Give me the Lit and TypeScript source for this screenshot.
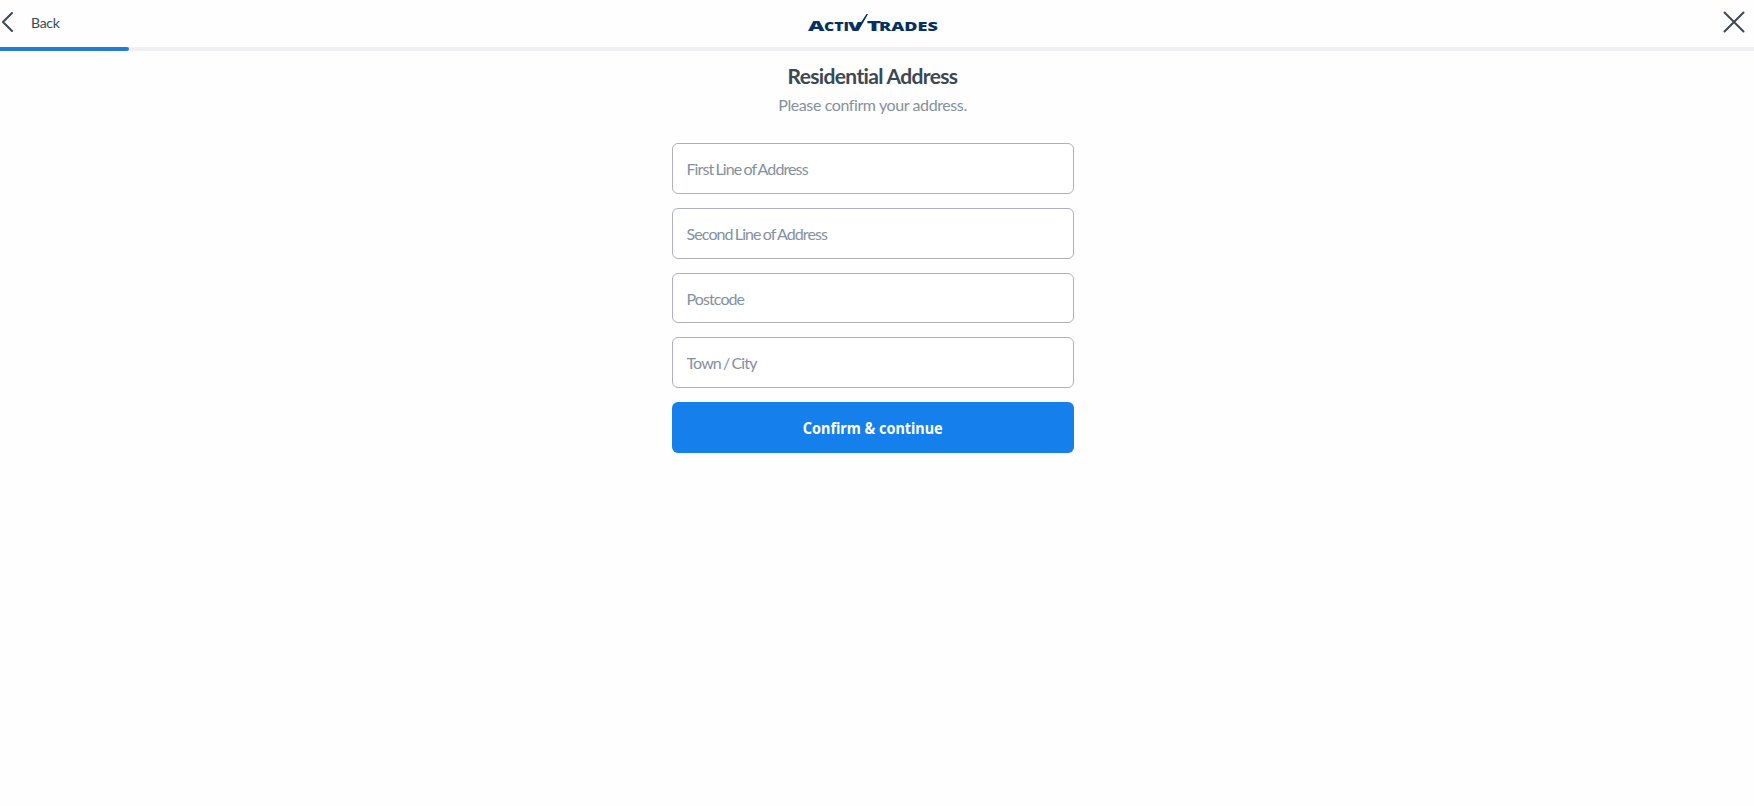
import { LitElement, css, html } from "lit";
import { customElement, property } from "lit/decorators.js";

const ADDRESS_FIELDS = [
  { name: "line1", label: "First Line of Address" },
  { name: "line2", label: "Second Line of Address" },
  { name: "postcode", label: "Postcode" },
  { name: "city", label: "Town / City" },
];

@customElement("brand-logo")
export class BrandLogo extends LitElement {
  static styles = css`
    :host {
      display: block;
      padding-top: 2px;
    }
    svg {
      display: block;
      width: 134px;
      height: 24px;
    }
    text {
      font-family: "Open Sans", "Noto Sans", sans-serif;
      font-weight: 800;
      fill: #06315c;
    }
    .large {
      font-size: 14.7px;
    }
    .small {
      font-size: 11.9px;
    }
    .tick {
      fill: #06315c;
    }
  `;

  render() {
    return html`
      <svg viewBox="0 0 134 24" role="img" aria-label="ActivTrades">
        <text class="large" x="2" y="19.8" textLength="16.5" lengthAdjust="spacingAndGlyphs">A</text>
        <text class="small" x="18" y="19.8" textLength="25" lengthAdjust="spacingAndGlyphs">CTI</text>
        <text class="small" x="42" y="19.8" textLength="14" lengthAdjust="spacingAndGlyphs">V</text>
        <path class="tick" d="M49.5 19.8 60.5 3h1.6L52.5 19.8z" />
        <text class="large" x="60.8" y="19.8" textLength="14.4" lengthAdjust="spacingAndGlyphs">T</text>
        <text class="small" x="73" y="19.8" textLength="58.8" lengthAdjust="spacingAndGlyphs">RADES</text>
      </svg>
    `;
  }
}

@customElement("step-header")
export class StepHeader extends LitElement {
  static styles = css`
    :host {
      display: block;
    }
    .bar {
      display: grid;
      grid-template-columns: 1fr auto 1fr;
      align-items: center;
      height: 47px;
      box-sizing: border-box;
      padding: 0 9px 3px 1px;
    }
    button {
      display: flex;
      align-items: center;
      padding: 0;
      border: 0;
      background: none;
      color: #3c4854;
      font: inherit;
      font-size: 14px;
      cursor: pointer;
    }
    .back {
      gap: 16px;
      justify-self: start;
    }
    .back span {
      letter-spacing: -0.3px;
    }
    .close {
      justify-self: end;
    }
    svg {
      display: block;
      fill: none;
      stroke: #3c4854;
      stroke-width: 2;
      stroke-linecap: round;
      stroke-linejoin: round;
    }
    .track {
      height: 4px;
      background: #f0f0f4;
    }
    .fill {
      height: 100%;
      border-radius: 0 2px 2px 0;
      background: #227cd8;
    }
  `;

  @property({ type: Number })
  progress = 0;

  render() {
    return html`
      <div class="bar">
        <button class="back" type="button">
          <svg width="14" height="22" viewBox="0 0 14 22">
            <path d="M11 2 2 11l9 9" />
          </svg>
          <span>Back</span>
        </button>
        <brand-logo></brand-logo>
        <button class="close" type="button" aria-label="Close">
          <svg width="22" height="22" viewBox="0 0 22 22">
            <path d="m1.5 1.5 19 19M20.5 1.5l-19 19" />
          </svg>
        </button>
      </div>
      <div class="track">
        <div class="fill" style=${`width: ${this.progress}%`}></div>
      </div>
    `;
  }
}

@customElement("app-root")
export class AppRoot extends LitElement {
  static styles = css`
    :host {
      display: block;
      min-height: 100vh;
      background: #fefefe;
      color: #3c4854;
      font-family: Lato, "Liberation Sans", sans-serif;
    }
    main {
      display: flex;
      flex-direction: column;
      align-items: center;
      box-sizing: border-box;
      padding: 12px 9px 0 0;
    }
    h1 {
      margin: 0;
      font-size: 21px;
      line-height: 26px;
      font-weight: 700;
      letter-spacing: -0.65px;
    }
    p {
      margin: 5px 0 0;
      color: #84919e;
      font-size: 16px;
      line-height: 22px;
      letter-spacing: -0.4px;
    }
    form {
      display: flex;
      flex-direction: column;
      gap: 14px;
      width: 402px;
      margin-top: 27.4px;
    }
    input,
    button {
      box-sizing: border-box;
      width: 100%;
      height: 50.7px;
      border-radius: 6px;
    }
    input {
      padding: 0 14px;
      border: 1px solid #afafc4;
      background: #fff;
      color: #3c4854;
      font: inherit;
      font-size: 16px;
      letter-spacing: -0.9px;
      word-spacing: -1px;
      outline: none;
    }
    input::placeholder {
      color: #84919e;
      opacity: 1;
    }
    button {
      height: 51px;
      border: 0;
      background: #1580ec;
      color: #fff;
      font-family: "Noto Sans", sans-serif;
      font-size: 16px;
      font-weight: 700;
      cursor: pointer;
    }
    .submit-label {
      display: inline-block;
      transform: scaleX(0.9);
    }
  `;

  render() {
    return html`
      <step-header .progress=${7.36}></step-header>
      <main>
        <h1>Residential Address</h1>
        <p>Please confirm your address.</p>
        <form @submit=${(e: Event) => e.preventDefault()}>
          ${ADDRESS_FIELDS.map(
            (field) => html`
              <input
                type="text"
                name=${field.name}
                placeholder=${field.label}
                aria-label=${field.label}
              />
            `,
          )}
          <button type="submit">
            <span class="submit-label">Confirm &amp; continue</span>
          </button>
        </form>
      </main>
    `;
  }
}

declare global {
  interface HTMLElementTagNameMap {
    "app-root": AppRoot;
    "brand-logo": BrandLogo;
    "step-header": StepHeader;
  }
}
